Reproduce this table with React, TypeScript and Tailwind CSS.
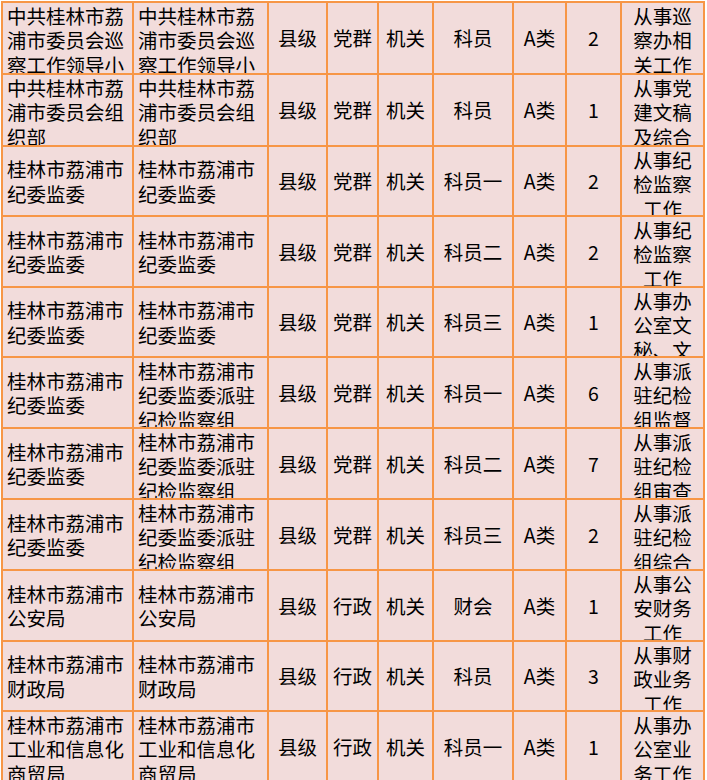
const rows: string[][] = [
  ["中共桂林市荔浦市委员会巡察工作领导小组办公室", "中共桂林市荔浦市委员会巡察工作领导小组办公室", "县级", "党群", "机关", "科员", "A类", "2", "从事巡察办相关工作"],
  ["中共桂林市荔浦市委员会组织部", "中共桂林市荔浦市委员会组织部", "县级", "党群", "机关", "科员", "A类", "1", "从事党建文稿及综合文字工作"],
  ["桂林市荔浦市纪委监委", "桂林市荔浦市纪委监委", "县级", "党群", "机关", "科员一", "A类", "2", "从事纪检监察工作"],
  ["桂林市荔浦市纪委监委", "桂林市荔浦市纪委监委", "县级", "党群", "机关", "科员二", "A类", "2", "从事纪检监察工作"],
  ["桂林市荔浦市纪委监委", "桂林市荔浦市纪委监委", "县级", "党群", "机关", "科员三", "A类", "1", "从事办公室文秘、文字工作"],
  ["桂林市荔浦市纪委监委", "桂林市荔浦市纪委监委派驻纪检监察组", "县级", "党群", "机关", "科员一", "A类", "6", "从事派驻纪检组监督执纪工作"],
  ["桂林市荔浦市纪委监委", "桂林市荔浦市纪委监委派驻纪检监察组", "县级", "党群", "机关", "科员二", "A类", "7", "从事派驻纪检组审查调查工作"],
  ["桂林市荔浦市纪委监委", "桂林市荔浦市纪委监委派驻纪检监察组", "县级", "党群", "机关", "科员三", "A类", "2", "从事派驻纪检组综合工作"],
  ["桂林市荔浦市公安局", "桂林市荔浦市公安局", "县级", "行政", "机关", "财会", "A类", "1", "从事公安财务工作"],
  ["桂林市荔浦市财政局", "桂林市荔浦市财政局", "县级", "行政", "机关", "科员", "A类", "3", "从事财政业务工作"],
  ["桂林市荔浦市工业和信息化商贸局", "桂林市荔浦市工业和信息化商贸局", "县级", "行政", "机关", "科员一", "A类", "1", "从事办公室业务工作"],
];

// 行高跟原表一致（像素略有出入）
const rowHeights = ["h-[70px]", "h-[70px]", "h-[68px]", "h-[69px]", "h-[68px]", "h-[69px]", "h-[69px]", "h-[69px]", "h-[69px]", "h-[68px]", "h-[69px]"];

// 第一、二列左对齐，其余居中
function Cell({ text, col }: { text: string; col: number }) {
  const left = col < 2;
  return (
    <div className="flex flex-col overflow-hidden bg-[#f2dcdb] px-[4px] pt-[1px]">
      <div className={`my-auto break-all ${left ? "text-left" : "text-center"}`}>{text}</div>
    </div>
  );
}

export default function App() {
  return (
    <div className="min-h-screen bg-white pl-[1px] pt-[1px]">
      <div
        className="grid w-[704px] gap-[2px] bg-[#f79646] p-[2px] text-[19.5px] leading-[24.3px] text-black"
        style={{ fontFamily: '"Noto Sans CJK SC", "Noto Sans", sans-serif' }}
      >
        {rows.map((r, ri) => (
          <div
            key={ri}
            className={`grid grid-cols-[129px_133px_57px_49px_53px_78px_51px_53px_81px] gap-[2px] ${rowHeights[ri]}`}
          >
            {r.map((t, ci) => (
              <Cell key={ci} text={t} col={ci} />
            ))}
          </div>
        ))}
      </div>
    </div>
  );
}
